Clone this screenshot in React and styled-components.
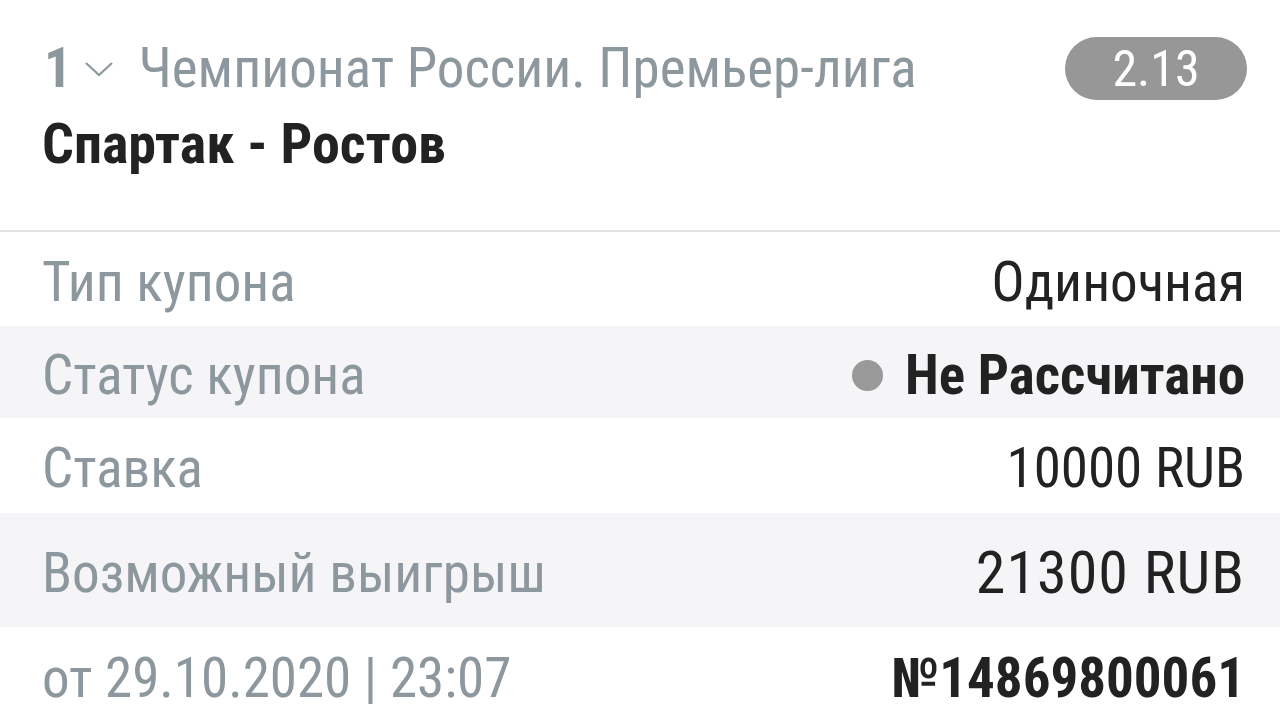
import React from "react";
import styled, { createGlobalStyle } from "styled-components";

const GlobalStyle = createGlobalStyle`
  html, body {
    margin: 0;
    padding: 0;
    background: #ffffff;
  }
  body {
    font-family: "Roboto Condensed", Roboto, "Liberation Sans", sans-serif;
    -webkit-font-smoothing: antialiased;
  }
`;

const Page = styled.div`
  width: 1280px;
  height: 718px;
  overflow: hidden;
  background: #fff;
`;

const Header = styled.header`
  box-sizing: border-box;
  height: 232px;
  padding: 37px 33px 0 42px;
  border-bottom: 2px solid #e3e3e5;
`;

const TopRow = styled.div`
  display: flex;
  align-items: center;
  justify-content: space-between;
  height: 63px;
`;

const League = styled.div`
  display: flex;
  align-items: center;
  color: #8d979e;
  font-size: 55px;
  line-height: 1;
  white-space: nowrap;
`;

const Num = styled.span`
  font-weight: 700;
  margin-left: 2px;
`;

const Chevron = styled.svg`
  width: 30px;
  height: 16px;
  margin: 0 25px 0 12px;
  flex: none;
`;

const Odds = styled.div`
  display: flex;
  align-items: center;
  justify-content: center;
  width: 182px;
  height: 63px;
  border-radius: 32px;
  background: #979797;
  color: #fff;
  font-size: 50px;
  line-height: 1;
`;

const Title = styled.h1`
  margin: 14px 0 0;
  color: #222;
  font-size: 56px;
  font-weight: 700;
  line-height: 60px;
`;

const Rows = styled.div`
  display: flex;
  flex-direction: column;
`;

const Row = styled.div`
  box-sizing: border-box;
  display: flex;
  align-items: center;
  justify-content: space-between;
  height: ${(p) => p.$h}px;
  padding: 6px 35px 0 42px;
  background: ${(p) => (p.$alt ? "#f5f5f7" : "#fff")};
`;

const Label = styled.span`
  color: #8d979e;
  font-size: 55px;
  line-height: 1;
`;

const Value = styled.span`
  display: flex;
  align-items: center;
  color: #222;
  font-size: ${(p) => p.$size || 55}px;
  letter-spacing: ${(p) => (p.$size ? 1 : 0)}px;
  font-weight: ${(p) => (p.$bold ? 700 : 400)};
  line-height: 1;
`;

const Dot = styled.span`
  width: 31px;
  height: 31px;
  border-radius: 50%;
  background: #999;
  margin-right: 22px;
`;

const rows = [
  { label: "Тип купона", value: "Одиночная", h: 94 },
  { label: "Статус купона", value: "Не Рассчитано", h: 92, alt: true, bold: true, dot: true },
  { label: "Ставка", value: "10000 RUB", h: 95 },
  { label: "Возможный выигрыш", value: "21300 RUB", h: 114, alt: true, size: 60 },
  { label: "от 29.10.2020 | 23:07", value: "№14869800061", h: 96, bold: true },
];

export default function App() {
  return (
    <Page>
      <GlobalStyle />
      <Header>
        <TopRow>
          <League>
            <Num>1</Num>
            <Chevron viewBox="0 0 30 16">
              <polyline points="2,2 15,14 28,2" fill="none" stroke="#8d979e" strokeWidth="2.2" />
            </Chevron>
            Чемпионат России. Премьер-лига
          </League>
          <Odds>2.13</Odds>
        </TopRow>
        <Title>Спартак - Ростов</Title>
      </Header>
      <Rows>
        {rows.map((r) => (
          <Row key={r.label} $h={r.h} $alt={r.alt}>
            <Label>{r.label}</Label>
            <Value $bold={r.bold} $size={r.size}>
              {r.dot && <Dot />}
              {r.value}
            </Value>
          </Row>
        ))}
      </Rows>
    </Page>
  );
}
